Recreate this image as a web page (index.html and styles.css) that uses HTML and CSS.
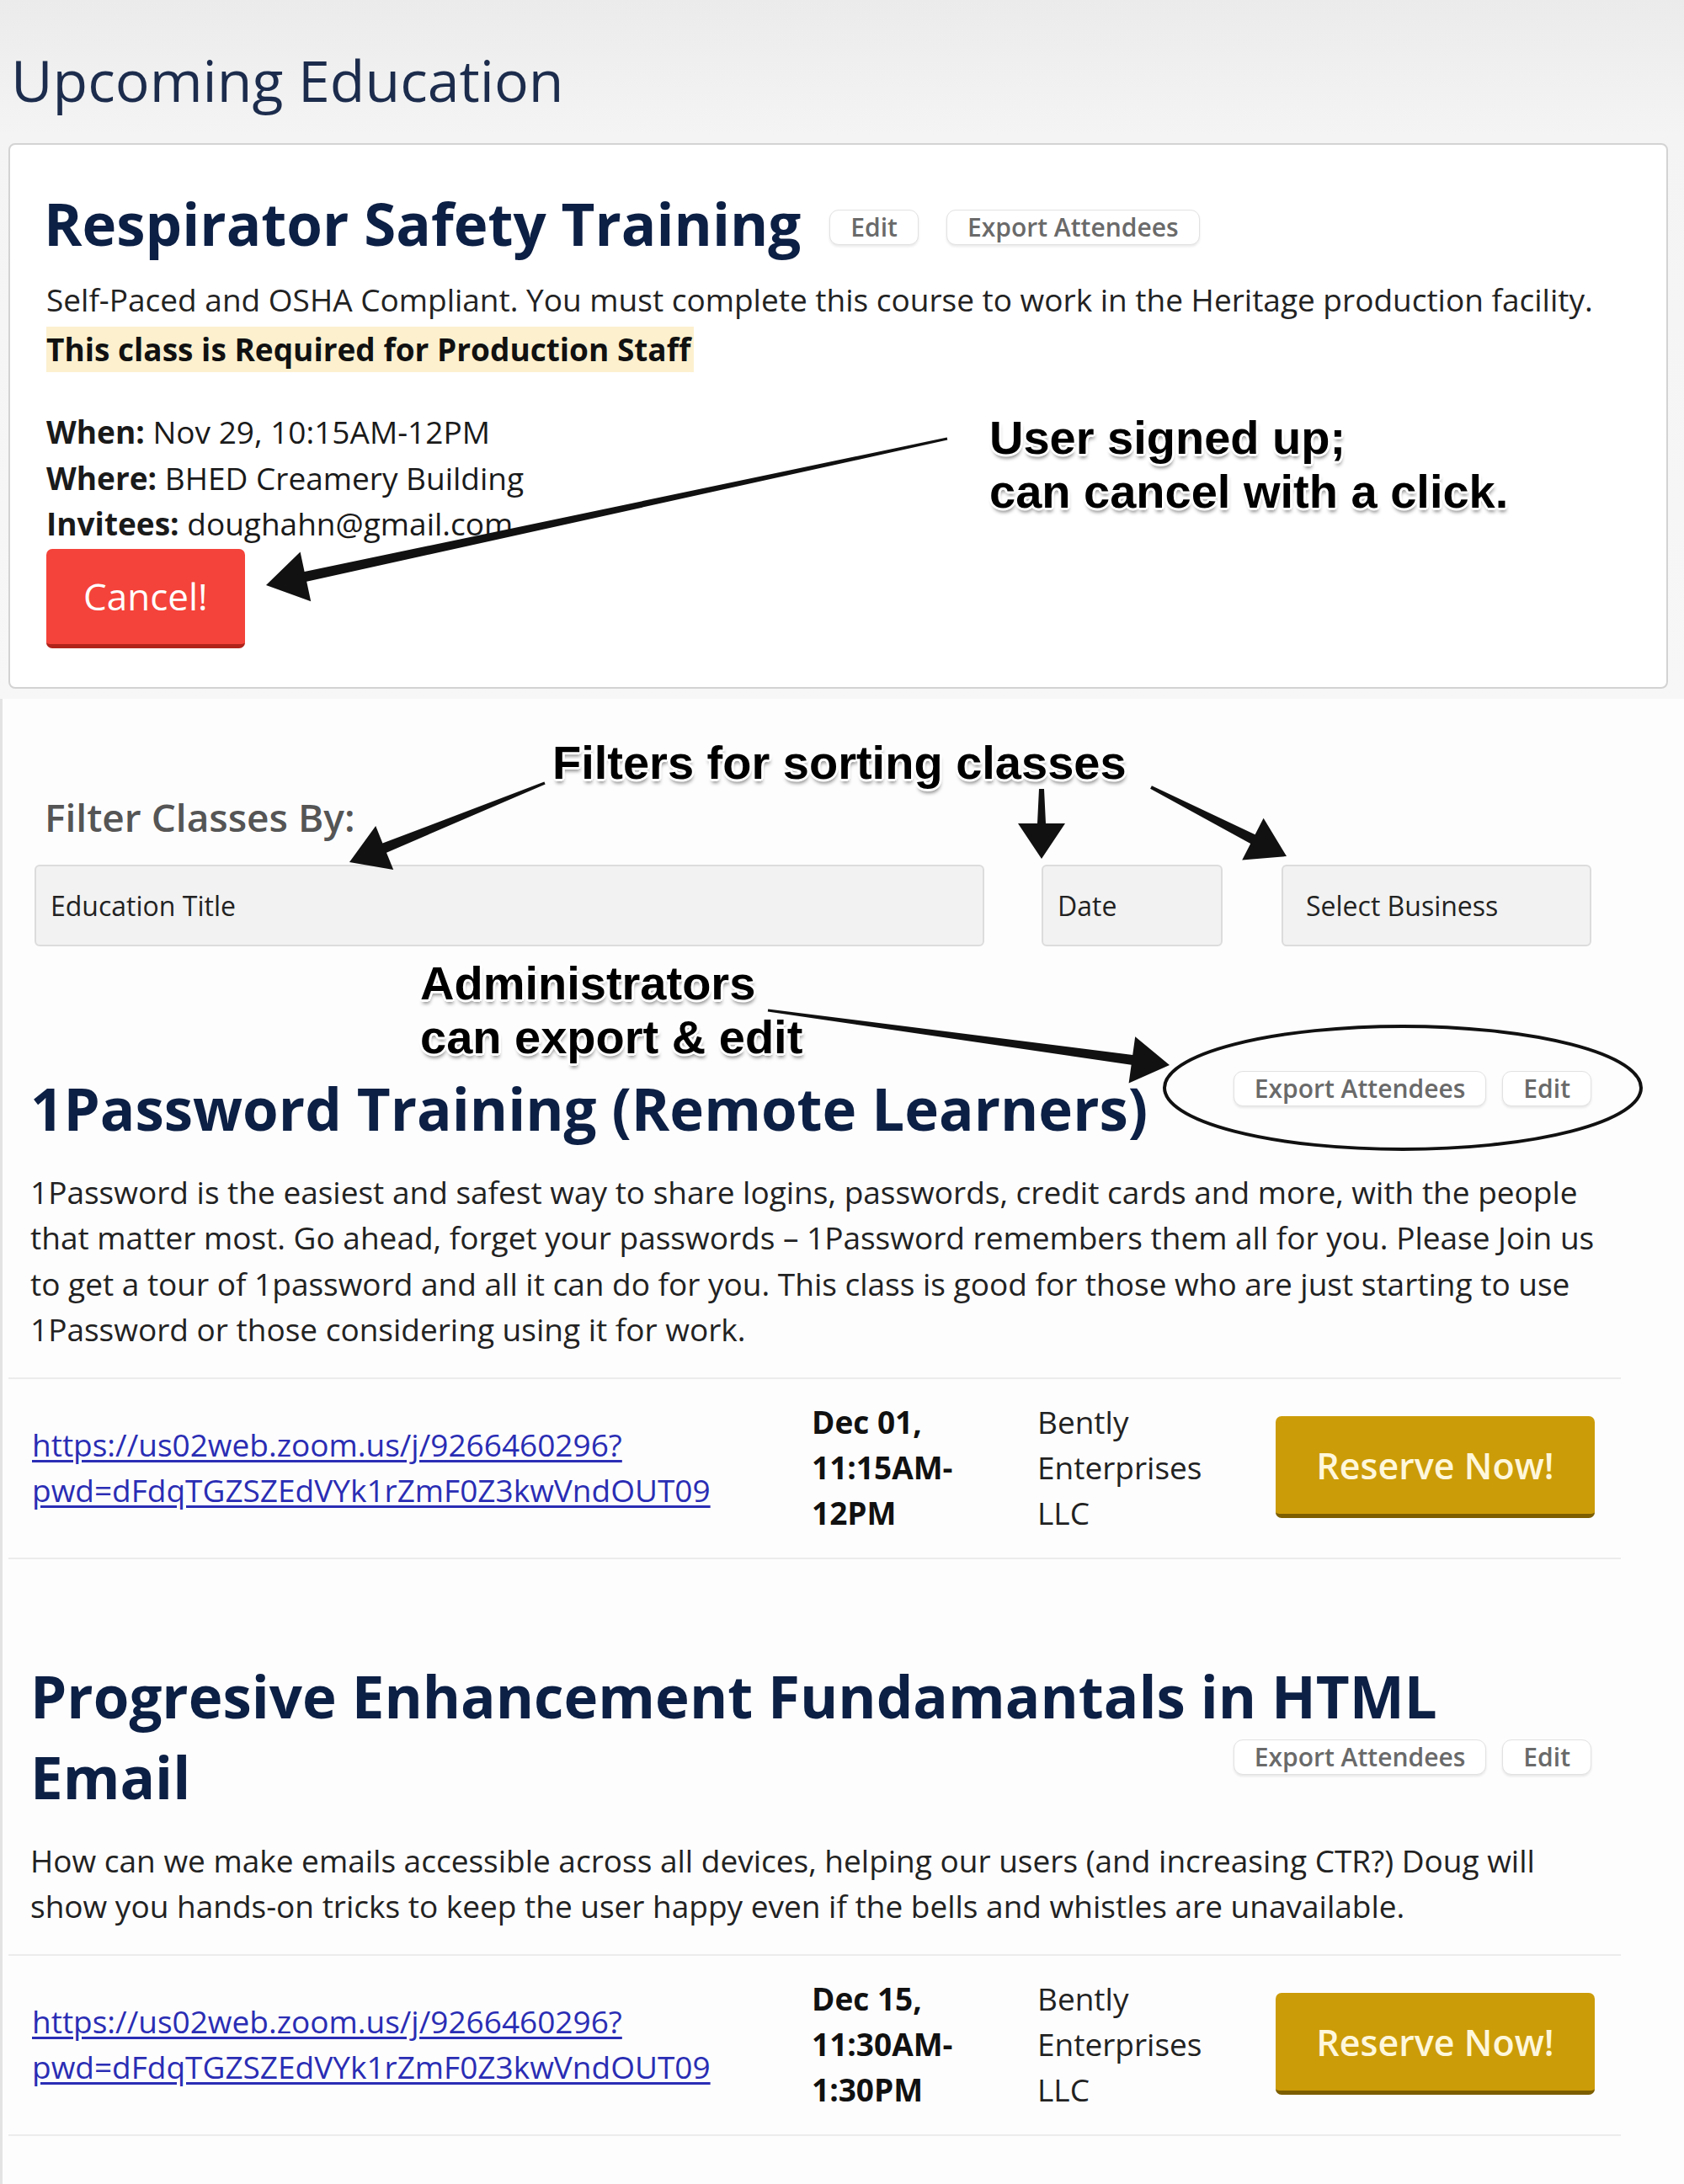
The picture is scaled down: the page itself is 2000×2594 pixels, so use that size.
FILE: index.html
```html
<!DOCTYPE html>
<html lang="en">
<head>
<meta charset="utf-8">
<title>Upcoming Education</title>
<link rel="stylesheet" href="styles.css">
</head>
<body>
<div class="page">
  <header class="top">
    <h1 class="page-title">Upcoming Education</h1>
    <section class="card">
      <div class="card-head">
        <h2 class="card-title">Respirator Safety Training</h2>
        <a href="#" class="pill pill-edit">Edit</a>
        <a href="#" class="pill pill-export">Export Attendees</a>
      </div>
      <p class="desc">Self-Paced and OSHA Compliant. You must complete this course to work in the Heritage production facility.</p>
      <div class="required">This class is Required for Production Staff</div>
      <ul class="details">
        <li><b>When:</b> Nov 29, 10:15AM-12PM</li>
        <li><b>Where:</b> BHED Creamery Building</li>
        <li><b>Invitees:</b> doughahn@gmail.com</li>
      </ul>
      <button class="btn btn-cancel" type="button">Cancel!</button>
    </section>
  </header>

  <main class="content">
    <section class="filters">
      <h3 class="filters-label">Filter Classes By:</h3>
      <div class="filter-row">
        <input class="field field-title" type="text" placeholder="Education Title">
        <input class="field field-date" type="text" placeholder="Date">
        <input class="field field-biz" type="text" placeholder="Select Business">
      </div>
    </section>

    <article class="class">
      <div class="class-head">
        <h2 class="class-title">1Password Training (Remote Learners)</h2>
        <div class="admin">
          <a href="#" class="pill">Export Attendees</a>
          <a href="#" class="pill">Edit</a>
        </div>
      </div>
      <p class="class-desc">1Password is the easiest and safest way to share logins, passwords, credit cards and more, with the people that matter most. Go ahead, forget your passwords – 1Password remembers them all for you. Please Join us to get a tour of 1password and all it can do for you. This class is good for those who are just starting to use 1Password or those considering using it for work.</p>
      <div class="session">
        <div class="cell cell-link"><a href="#" class="zoom-link">https://us02web.zoom.us/j/9266460296?<wbr>pwd=dFdqTGZSZEdVYk1rZmF0Z3kwVndOUT09</a></div>
        <div class="cell cell-when">Dec 01, 11:15AM-12PM</div>
        <div class="cell cell-biz">Bently Enterprises LLC</div>
        <div class="cell cell-action"><button class="btn btn-reserve" type="button">Reserve Now!</button></div>
      </div>
    </article>

    <article class="class">
      <div class="class-head">
        <h2 class="class-title">Progresive Enhancement Fundamantals in HTML Email</h2>
        <div class="admin">
          <a href="#" class="pill">Export Attendees</a>
          <a href="#" class="pill">Edit</a>
        </div>
      </div>
      <p class="class-desc">How can we make emails accessible across all devices, helping our users (and increasing CTR?) Doug will show you hands-on tricks to keep the user happy even if the bells and whistles are unavailable.</p>
      <div class="session">
        <div class="cell cell-link"><a href="#" class="zoom-link">https://us02web.zoom.us/j/9266460296?<wbr>pwd=dFdqTGZSZEdVYk1rZmF0Z3kwVndOUT09</a></div>
        <div class="cell cell-when">Dec 15, 11:30AM-1:30PM</div>
        <div class="cell cell-biz">Bently Enterprises LLC</div>
        <div class="cell cell-action"><button class="btn btn-reserve" type="button">Reserve Now!</button></div>
      </div>
    </article>
  </main>

  <svg class="arrows" viewBox="0 0 2000 2594" width="2000" height="2594" aria-hidden="true">
    <polygon points="1124.7,519.5 361.6,679.0 356.6,655.6 316,695 369.2,714.2 364.2,690.8 1125.3,522.5"/>
    <polygon points="646.4,928.6 454.4,1001.5 446.2,981.1 415,1024 467.2,1033.1 459.0,1012.7 647.6,931.4"/>
    <polygon points="1234,937 1232,978 1209,978 1237,1020 1265,978 1242,978 1240,937"/>
    <polygon points="1366.1,936.8 1485.2,1001.9 1475.2,1021.5 1528,1017 1500.6,971.7 1490.6,991.3 1367.9,933.2"/>
    <polygon points="911.8,1201.5 1343.6,1264.8 1340.6,1286.6 1389,1265 1348.2,1231.2 1345.2,1253.0 912.2,1198.5"/>
    <ellipse cx="1666" cy="1292" rx="283" ry="73" fill="none" stroke="#111" stroke-width="4"/>
  </svg>

  <p class="note note-cancel">User signed up;<br>can cancel with a click.</p>
  <p class="note note-filters">Filters for sorting classes</p>
  <p class="note note-admin">Administrators<br>can export &amp; edit</p>
</div>
</body>
</html>
```
FILE: styles.css
```css
* { box-sizing: border-box; }

html, body {
  margin: 0;
  padding: 0;
}

body {
  width: 2000px;
  font-family: "Open Sans", "Noto Sans", sans-serif;
  color: #222;
  background: #fdfdfd;
}

.page {
  position: relative;
  min-height: 2594px;
}

/* ---------- header + signed-up card ---------- */
.top {
  padding: 53px 19px 12px 10px;
  background: linear-gradient(#ebebeb, #f4f4f4 160px, #f7f7f7);
}

.page-title {
  margin: 0 0 33px 3px;
  font-size: 68px;
  font-weight: 400;
  line-height: 84px;
  color: #1c2c4c;
}

.card {
  background: #fff;
  border: 2px solid #d3d3d3;
  border-radius: 8px;
  padding: 47px 40px 46px 43px;
}

.card-head {
  display: flex;
  align-items: center;
}

.card-title {
  margin: 0 0 0 -3px;
  font-size: 69px;
  font-weight: 700;
  line-height: 93px;
  color: #0c1f44;
}

.card-head .pill { margin-top: 9px; }
.card-head .pill-edit { margin-left: 34px; }
.card-head .pill-export { margin-left: 33px; }

.pill {
  display: inline-block;
  padding: 1px 24px;
  font-size: 30px;
  font-weight: 600;
  line-height: 38px;
  color: #6a6a6a;
  text-decoration: none;
  background: #fff;
  border: 1px solid #e2e2e2;
  border-radius: 11px;
  box-shadow: 0 2px 3px rgba(0, 0, 0, 0.09);
}

.desc {
  margin: 17px 0 0;
  font-size: 37px;
  line-height: 54.5px;
}

.required {
  display: table;
  margin-top: 4px;
  padding-right: 4px;
  font-size: 37px;
  font-weight: 700;
  line-height: 54.5px;
  color: #111;
  background: #fcf0cf;
}

.details {
  list-style: none;
  margin: 44px 0 0;
  padding: 0;
  font-size: 37px;
  line-height: 54.5px;
  color: #1a1a1a;
}

.details b { font-weight: 700; }

.btn {
  display: block;
  border: 0;
  border-radius: 7px;
  font-family: "Open Sans", "Noto Sans", sans-serif;
  font-size: 44px;
  font-weight: 400;
  line-height: 1;
  cursor: pointer;
}

.btn-cancel {
  margin-top: 2px;
  height: 118px;
  padding: 0 44px;
  color: #fff;
  background: #f4433a;
  border-bottom: 5px solid #b0231b;
}

/* ---------- list of classes ---------- */
.content {
  border-left: 3px solid #e3e3e3;
  padding: 110px 100px 60px 33px;
}

.filters { padding-bottom: 30px; }

.filters-label {
  margin: 0 0 27px 17px;
  font-size: 46px;
  font-weight: 600;
  line-height: 60px;
  color: #555;
}

.filter-row {
  display: flex;
  padding-left: 5px;
}

.field {
  height: 97px;
  padding: 0 17px;
  font-family: "Open Sans", "Noto Sans", sans-serif;
  font-size: 32px;
  color: #222;
  background: #f2f2f2;
  border: 2px solid #dcdcdc;
  border-radius: 6px;
}

.field::placeholder { color: #222; opacity: 1; }

.field-title { width: 1128px; }
.field-date { width: 215px; margin-left: 68px; }
.field-biz { width: 368px; margin-left: 70px; padding-left: 27px; }

.class { margin-top: 114px; }

.class-head { display: grid; }
.class-head > * { grid-area: 1 / 1; }

.class-title {
  margin: 0;
  max-width: 1820px;
  font-size: 69px;
  font-weight: 700;
  line-height: 96px;
  color: #0c1f44;
}

.admin {
  display: flex;
  gap: 19px;
  justify-self: end;
  align-self: end;
  margin: 0 10px 50px 0;
}

.class-desc {
  margin: 25px 0 0;
  font-size: 37px;
  line-height: 54.5px;
}

.session {
  display: grid;
  grid-template-columns: 926px 268px 283px 1fr;
  align-items: center;
  margin: 29px -25px 0 -26px;
  padding: 24px 0 26px;
  border-top: 2px solid #ececec;
  border-bottom: 2px solid #ececec;
  font-size: 37px;
  line-height: 54px;
}

.cell { padding: 0 28px; }

.zoom-link {
  color: #2a2db4;
  text-decoration: underline;
  text-underline-offset: 4px;
}

.cell-when { font-weight: 700; color: #111; }

.btn-reserve {
  width: 379px;
  height: 121px;
  font-size: 43px;
  font-weight: 600;
  color: #fff7dc;
  background: #cc9c08;
  border-bottom: 5px solid #7d5e00;
}

/* ---------- annotation overlay ---------- */
.arrows {
  position: absolute;
  left: 0;
  top: 0;
  pointer-events: none;
}

.arrows polygon { fill: #111; }

.note {
  position: absolute;
  margin: 0;
  white-space: nowrap;
  font-family: "Liberation Sans", Arial, sans-serif;
  font-size: 56px;
  font-weight: 700;
  line-height: 64px;
  color: #000;
  text-shadow:
    3px 0 0 #fff, -3px 0 0 #fff, 0 3px 0 #fff, 0 -3px 0 #fff,
    2px 2px 0 #fff, -2px -2px 0 #fff, 2px -2px 0 #fff, -2px 2px 0 #fff,
    1px 5px 4px rgba(0, 0, 0, 0.45);
}

.note-cancel { left: 1175px; top: 488px; }
.note-filters { left: 656px; top: 874px; }
.note-admin { left: 499px; top: 1136px; }
```
